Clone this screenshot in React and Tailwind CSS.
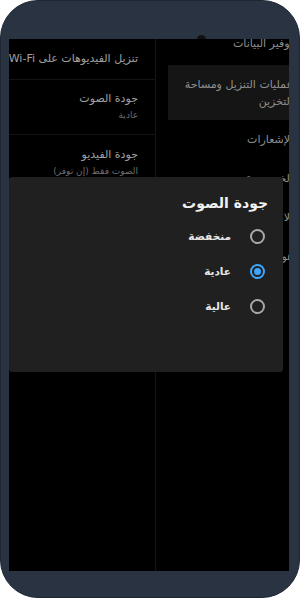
import React from "react";

function Radio({ checked }) {
  return checked ? (
    <span className="flex h-[15px] w-[15px] items-center justify-center rounded-full border-2 border-[#3ea6ff]">
      <span className="h-[7px] w-[7px] rounded-full bg-[#3ea6ff]" />
    </span>
  ) : (
    <span className="h-[15px] w-[15px] rounded-full border-2 border-[#a8a8a8]" />
  );
}

export default function App() {
  const options = [
    { label: "منخفضة", checked: false },
    { label: "عادية", checked: true },
    { label: "عالية", checked: false },
  ];
  return (
    <div className="h-[600px] w-[300px] bg-white font-['DejaVu_Sans',sans-serif]">
      <div className="relative flex h-[598px] w-[300px] flex-col rounded-[38px] border border-[#1f2633] bg-[#2a3342] pb-[26px] pl-[8px] pr-[10px] pt-[38px]">
        <div className="absolute left-[196px] top-[34px] h-[5px] w-[9px] rounded-t-full bg-[#111]" />
        <div dir="rtl" className="relative flex flex-1 overflow-hidden bg-black">
          {/* right column */}
          <div className="flex w-[134px] shrink-0 flex-col border-l border-[#161616] text-[11px] text-[#8f8f8f]">
            <div className="mr-[-4px] mb-[16px] flex h-[10px] items-center whitespace-nowrap">توفير البيانات</div>
            <div className="ml-[12px] mr-[-4px] flex h-[55px] flex-col justify-center bg-[#151515] leading-[17px]">
              <span className="whitespace-nowrap">عمليات التنزيل ومساحة</span>
              <span>التخزين</span>
            </div>
            <div className="mr-[-4px] flex h-[40px] items-center whitespace-nowrap">الإشعارات</div>
            <div className="mr-[-4px] flex h-[38px] items-center whitespace-nowrap">الخصوصية</div>
            <div className="mr-[-4px] flex h-[40px] items-center whitespace-nowrap">الاشتراكات</div>
            <div className="mr-[-4px] flex h-[39px] items-center whitespace-nowrap">هو</div>
          </div>
          {/* left column */}
          <div className="flex min-w-0 flex-1 flex-col text-[11px] text-[#a0a0a0]">
            <div className="flex h-[41px] items-center whitespace-nowrap border-b border-[#141414] pr-[17px]">
              تنزيل الفيديوهات على Wi-Fi فقط
            </div>
            <div className="flex h-[55px] flex-col justify-center border-b border-[#141414] pr-[17px] leading-[16px]">
              <span>جودة الصوت</span>
              <span className="text-[9px] text-[#6f6f6f]">عادية</span>
            </div>
            <div className="flex h-[55px] flex-col justify-center pr-[17px] leading-[16px]">
              <span>جودة الفيديو</span>
              <span className="text-[9px] text-[#6f6f6f]">الصوت فقط (إن توفر)</span>
            </div>
          </div>

          {/* dialog */}
          <div className="absolute left-0 right-[6px] top-[138px] flex h-[195px] flex-col rounded-[3px] bg-[#202020] pr-[15px] pt-[16px]">
            <div className="text-[14px] font-bold leading-[20px] text-[#f1f1f1]">جودة الصوت</div>
            <div className="mt-[6px] flex flex-col">
              {options.map((o) => (
                <div key={o.label} className="flex h-[35px] items-center gap-[19px] pr-[3px]">
                  <Radio checked={o.checked} />
                  <span className="text-[10.5px] font-bold text-[#e6e6e6]">{o.label}</span>
                </div>
              ))}
            </div>
          </div>
        </div>
      </div>
    </div>
  );
}
